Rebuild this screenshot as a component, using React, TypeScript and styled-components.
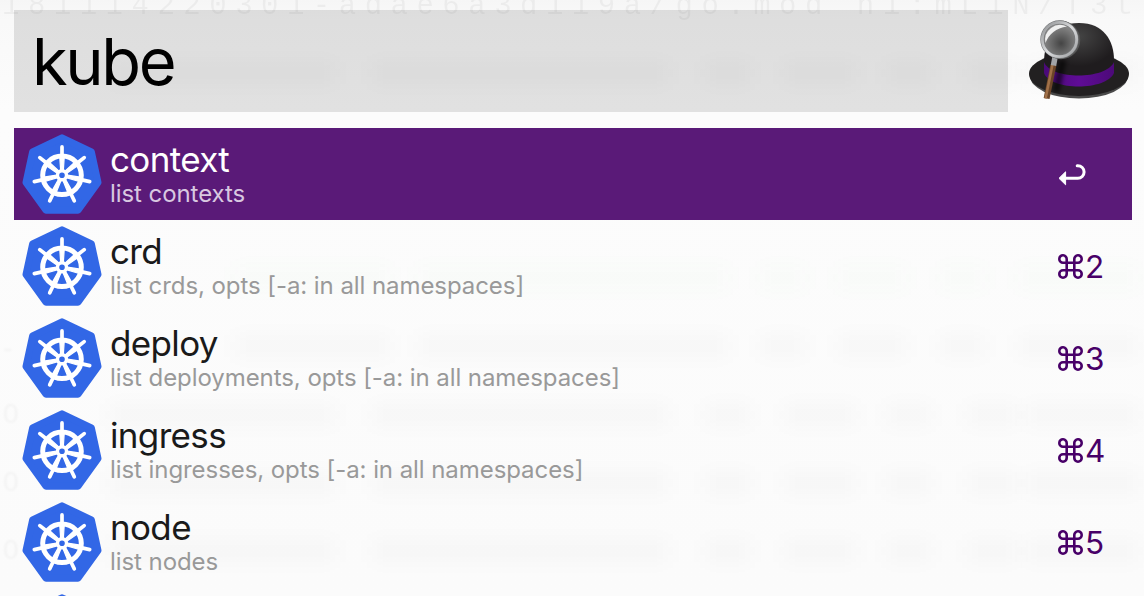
import React from 'react';
import styled, { createGlobalStyle } from 'styled-components';

const GlobalStyle = createGlobalStyle`
  * { box-sizing: border-box; }
  body { margin: 0; background: #fbfbfb; overflow: hidden; }
`;

const Window = styled.main`
  position: relative;
  width: 1144px;
  height: 596px;
  overflow: hidden;
  padding: 10px 12px 0 14px;
  background: linear-gradient(#f6f6f6, #f9f9f9 20px, #fcfcfc 110px, #fbfbfb);
  font-family: Inter, "Liberation Sans", sans-serif;
`;

const Backdrop = styled.div`
  position: absolute;
  inset: 0;
  pointer-events: none;
`;

const BackdropCode = styled.div`
  position: absolute;
  left: 2px;
  top: -9px;
  white-space: pre;
  font: 29px/32px "Liberation Mono", monospace;
  letter-spacing: 8.5px;
  color: rgba(0, 0, 0, 0.045);
  filter: blur(0.7px);
`;

const Smudge = styled.i<{ $x: number; $y: number; $w: number; $green?: boolean }>`
  position: absolute;
  left: ${(p) => p.$x}px;
  top: ${(p) => p.$y - 11}px;
  width: ${(p) => p.$w}px;
  height: 22px;
  background: ${(p) => (p.$green ? 'rgba(60, 200, 60, 0.02)' : 'rgba(0, 0, 0, 0.021)')};
  filter: blur(9px);
`;

const EdgeGlyph = styled.span<{ $x: number; $y: number }>`
  position: absolute;
  left: ${(p) => p.$x}px;
  top: ${(p) => p.$y}px;
  font: 28px/32px "Liberation Sans", sans-serif;
  color: rgba(0, 0, 0, 0.035);
  filter: blur(0.8px);
`;

const Header = styled.header`
  position: relative;
  display: flex;
  height: 102px;
  margin-bottom: 16px;
`;

const SearchField = styled.div`
  width: 994px;
  height: 102px;
  padding-left: 18px;
  background: rgba(0, 0, 0, 0.105);
  color: #000;
  font-size: 65px;
  font-weight: 400;
  line-height: 103px;
  letter-spacing: -2.4px;
`;

const HatIcon = styled.svg`
  width: 116px;
  height: 102px;
  margin-left: 8px;
`;

const List = styled.ul`
  position: relative;
  margin: 0;
  padding: 0;
  list-style: none;
`;

const Row = styled.li<{ $selected?: boolean }>`
  display: flex;
  height: 92px;
  padding: 6px 28px 6px 8px;
  background: ${(p) => (p.$selected ? '#5a1a78' : 'transparent')};
  color: ${(p) => (p.$selected ? '#fff' : '#1a1a1a')};
`;

const RowIcon = styled.svg`
  flex: none;
  width: 80px;
  height: 80px;
  margin-right: 8px;
`;

const Labels = styled.div`
  flex: 1;
  white-space: nowrap;
`;

const Title = styled.div`
  height: 42px;
  font-size: 35px;
  font-weight: 440;
  line-height: 50px;
  letter-spacing: -0.65px;
`;

const Subtitle = styled.div<{ $selected?: boolean }>`
  font-size: 24px;
  font-weight: 420;
  line-height: 36px;
  letter-spacing: -0.07px;
  color: ${(p) => (p.$selected ? '#d8c8e0' : '#999')};
`;

const Shortcut = styled.div`
  display: flex;
  align-items: center;
  width: 46px;
  gap: 2px;
  color: #480068;
`;

const Digit = styled.span`
  font-size: 31.5px;
  font-weight: 440;
  line-height: 40px;
  padding-top: 2px;
  letter-spacing: -0.5px;
`;

const CommandIcon = styled.svg`
  flex: none;
  width: 25px;
  height: 25px;
`;

const ReturnIcon = styled.svg`
  width: 28px;
  height: 24px;
`;

const SPOKES = [0, 1, 2, 3, 4, 5, 6].map((i) => (i * 360) / 7);

function Helm() {
  return (
    <RowIcon viewBox="0 0 80 80">
      <path
        d="M40 3.8 L69.4 18 L76 48.5 L56 76.3 H24 L4 48.5 L10.6 18 Z"
        fill="#3267e6"
        stroke="#3267e6"
        strokeWidth="7"
        strokeLinejoin="round"
      />
      <g stroke="#fff" fill="none" strokeLinecap="round">
        <circle cx="40" cy="41.3" r="19.3" strokeWidth="5" />
        {SPOKES.map((a) => (
          <g key={a} transform={`rotate(${a} 40 41.3)`}>
            <path d="M40 12.9 V22" strokeWidth="3.7" />
            <path d="M37.7 22 h4.6 L41.3 37 h-2.6 Z" fill="#fff" strokeWidth="1.2" />
          </g>
        ))}
        <circle cx="40" cy="41.3" r="4.5" fill="#3267e6" strokeWidth="3.4" />
      </g>
    </RowIcon>
  );
}

function Command() {
  return (
    <CommandIcon viewBox="0 0 25 25" fill="none" stroke="currentColor" strokeWidth="2.6">
      <path d="M8.7 8.7 V5.2 A3.7 3.7 0 1 0 5 8.7 H20 A3.7 3.7 0 1 0 16.3 5.2 V20 A3.7 3.7 0 1 0 20 16.3 H5 A3.7 3.7 0 1 0 8.7 20 Z" />
    </CommandIcon>
  );
}

function Return() {
  return (
    <ReturnIcon viewBox="0 0 28 24">
      <path d="M7 16.3 H19.8 A6.3 6.3 0 0 0 19.8 3.7 H19.2" fill="none" stroke="#fff" strokeWidth="3" strokeLinecap="round" />
      <path d="M1 16.3 L7.6 9.8 V22.8 Z" fill="#fff" stroke="#fff" strokeWidth="1" strokeLinejoin="round" />
    </ReturnIcon>
  );
}

function Hat() {
  return (
    <HatIcon viewBox="1016 10 116 102">
      <defs>
        <radialGradient id="crown" cx="0.5" cy="0.25" r="0.55">
          <stop offset="0" stopColor="#444" />
          <stop offset="1" stopColor="#1f1c1e" />
        </radialGradient>
        <radialGradient id="lens" cx="0.55" cy="0.62" r="0.6">
          <stop offset="0" stopColor="#444" />
          <stop offset="1" stopColor="#8d8d8d" />
        </radialGradient>
        <linearGradient id="rim" x1="0" y1="0" x2="1" y2="1">
          <stop offset="0" stopColor="#8a8c8e" />
          <stop offset="0.5" stopColor="#dcdddf" />
          <stop offset="1" stopColor="#9a9c9e" />
        </linearGradient>
        <linearGradient id="band">
          <stop offset="0" stopColor="#4a0a78" />
          <stop offset="0.5" stopColor="#5f0c96" />
          <stop offset="1" stopColor="#4c0a78" />
        </linearGradient>
        <filter id="soft" x="-100%" y="-50%" width="300%" height="200%">
          <feGaussianBlur stdDeviation="2" />
        </filter>
      </defs>
      <ellipse cx="1079" cy="76" rx="49" ry="22.5" fill="#4a4a4a" />
      <ellipse cx="1079" cy="74" rx="50" ry="22" fill="#222021" />
      <path d="M1044 68 C1043 42 1052 23 1079 23 C1104 23 1114 41 1114 60 V69 C1106 80 1052 80 1044 68 Z" fill="url(#crown)" />
      <path d="M1044 62 C1051 80 1106 80 1114 62 V73 C1106 91 1051 91 1044 73 Z" fill="url(#band)" />
      <path d="M1063 60 L1056 92" stroke="#000" strokeOpacity="0.6" strokeWidth="7" filter="url(#soft)" />
      <path d="M1053.4 65 L1046.6 98.5" stroke="#6b4528" strokeWidth="6" />
      <path d="M1052.4 65 L1045.6 98.5" stroke="#a07048" strokeWidth="2.6" />
      <path d="M1055.2 56 L1053.5 65.5" stroke="#a3a5a8" strokeWidth="5.5" />
      <circle cx="1061" cy="40" r="18" fill="none" stroke="#555" strokeWidth="2.5" />
      <circle cx="1059.5" cy="39.5" r="16" fill="url(#lens)" />
      <path d="M1045.5 43 A15 15 0 0 1 1067 26.5 C1056 28 1049 34 1045.5 43Z" fill="#f0f0f0" />
      <circle cx="1059.5" cy="39.5" r="17.2" fill="none" stroke="#77797b" strokeWidth="4" />
      <circle cx="1059.5" cy="39.5" r="17.2" fill="none" stroke="url(#rim)" strokeWidth="2.8" />
    </HatIcon>
  );
}

const ITEMS = [
  { title: 'context', sub: 'list contexts' },
  { title: 'crd', sub: 'list crds, opts [-a: in all namespaces]', key: '2' },
  { title: 'deploy', sub: 'list deployments, opts [-a: in all namespaces]', key: '3' },
  { title: 'ingress', sub: 'list ingresses, opts [-a: in all namespaces]', key: '4' },
  { title: 'node', sub: 'list nodes', key: '5' },
];

const SPANS: [number, number][] = [
  [110, 225], [372, 296], [705, 45], [784, 72], [886, 45], [967, 50], [1026, 112],
];
const SHIFTED_SPANS: [number, number][] = [
  [235, 155], [418, 310], [760, 45], [838, 68], [940, 45], [1018, 120],
];

const SMUDGE_ROWS = [
  { y: 73, spans: SPANS },
  { y: 278, spans: SHIFTED_SPANS, green: true },
  { y: 346, spans: SHIFTED_SPANS },
  { y: 415, spans: SPANS },
  { y: 483, spans: SPANS },
  { y: 551, spans: SPANS },
];

export default function App() {
  return (
    <Window>
      <GlobalStyle />
      <Backdrop aria-hidden>
        <BackdropCode>181114220301-adae6a3d119a/go.mod h1:mL1N/T3t</BackdropCode>
        {SMUDGE_ROWS.map((row) =>
          row.spans.map(([x, w]) => (
            <Smudge key={`${x}-${row.y}`} $x={x} $y={row.y} $w={w} $green={row.green} />
          )),
        )}
        <EdgeGlyph $x={3} $y={332}>-</EdgeGlyph>
        {[398, 466, 534].map((y) => (
          <EdgeGlyph key={y} $x={3} $y={y}>0</EdgeGlyph>
        ))}
      </Backdrop>
      <Header>
        <SearchField>kube</SearchField>
        <Hat />
      </Header>
      <List>
        {ITEMS.map((it, i) => (
          <Row key={it.title} $selected={i === 0}>
            <Helm />
            <Labels>
              <Title>{it.title}</Title>
              <Subtitle $selected={i === 0}>{it.sub}</Subtitle>
            </Labels>
            <Shortcut>
              {it.key ? (
                <>
                  <Command />
                  <Digit>{it.key}</Digit>
                </>
              ) : (
                <Return />
              )}
            </Shortcut>
          </Row>
        ))}
        <Row>
          <Helm />
        </Row>
      </List>
    </Window>
  );
}
